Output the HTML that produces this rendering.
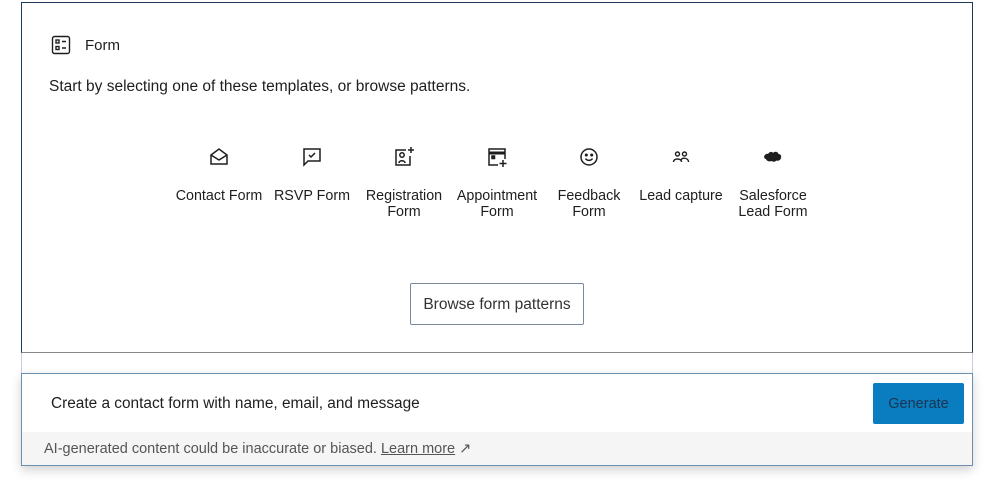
<!DOCTYPE html>
<html><head><style>
body{margin:0;width:1000px;height:482px;background:#fff;font-family:"Liberation Sans",sans-serif;color:#1e1e1e;position:relative;overflow:hidden}
.box{position:absolute;left:21px;top:2px;width:950px;height:349px;border:1px solid #1e3a5a;border-bottom:1px solid #888}
.title{position:absolute;left:51px;top:35px;font-size:15px;display:flex;align-items:center;gap:14px}
.sub{position:absolute;left:49px;top:78px;font-size:15.5px}
.item{position:absolute;top:146px;width:92px;text-align:center;font-size:14.3px;line-height:16px;white-space:nowrap}
.item svg{display:block;margin:0 auto 20px}
.btn{position:absolute;left:410px;top:283px;width:172px;height:40px;border:1px solid #7a8a9e;border-radius:2px;font-size:15.5px;color:#333;text-align:center;line-height:41px}
.mid{position:absolute;left:21px;top:353px;width:950px;height:20px;border-left:1px solid #ccd;border-right:1px solid #ccd}
.panel{position:absolute;left:21px;top:373px;width:950px;height:91px;border:1px solid #6b8fb0;box-shadow:0 4px 10px rgba(0,0,0,.18);background:#fff}
.panel .inp{position:absolute;left:29px;top:21px;font-size:15.4px}
.gen{position:absolute;left:851px;top:9px;width:91px;height:41px;background:#0a7cc0;border-radius:2px;color:#1a3550;font-size:14.5px;text-align:center;line-height:42px}
.foot{position:absolute;left:0;top:58px;width:950px;height:33px;background:#f5f5f5;font-size:14.5px;color:#555;line-height:35px;padding-left:22px;box-sizing:border-box}
.foot u{color:#555}
</style></head><body>
<div class="box"></div>
<div class="title"><svg width="20" height="20" viewBox="0 0 20 20" fill="none" stroke="#1e1e1e" stroke-width="1.4"><rect x="1.5" y="1.5" width="17" height="17" rx="2"/><rect x="5" y="5" width="3" height="3"/><rect x="5" y="11.5" width="3" height="3"/><path d="M11 6.5h4M11 13h4"/></svg>Form</div>
<div class="sub">Start by selecting one of these templates, or browse patterns.</div>

<div class="item" style="left:173px"><svg width="22" height="22" viewBox="0 0 22 22" fill="none" stroke="#1e1e1e" stroke-width="1.5"><path d="M3 9l8-6 8 6v9H3z"/><path d="M3 9l8 5 8-5"/></svg>Contact Form</div>
<div class="item" style="left:266px"><svg width="22" height="22" viewBox="0 0 22 22" fill="none" stroke="#1e1e1e" stroke-width="1.5"><path d="M3 3h16v12H7l-4 4z"/><path d="M8 9l2 2 4-4"/></svg>RSVP Form</div>
<div class="item" style="left:358px"><svg width="22" height="22" viewBox="0 0 22 22" fill="none" stroke="#1e1e1e" stroke-width="1.5"><path d="M13 4H3v15h14V10"/><circle cx="9" cy="9" r="2.2"/><path d="M6 17c0-3 6-3 6 0"/><path d="M18 1v6M15 4h6"/></svg>Registration<br>Form</div>
<div class="item" style="left:451px"><svg width="22" height="22" viewBox="0 0 22 22" fill="none" stroke="#1e1e1e" stroke-width="1.5"><path d="M12 19H3V3h16v10"/><path d="M3 7h16" stroke-width="3"/><rect x="6" y="10" width="2.5" height="2.5" fill="#1e1e1e"/><path d="M17 14v7M13.5 17.5h7"/></svg>Appointment<br>Form</div>
<div class="item" style="left:543px"><svg width="22" height="22" viewBox="0 0 22 22" fill="none" stroke="#1e1e1e" stroke-width="1.5"><circle cx="11" cy="11" r="8"/><circle cx="8.3" cy="9" r=".8" fill="#1e1e1e"/><circle cx="13.7" cy="9" r=".8" fill="#1e1e1e"/><path d="M7.5 12.5c1.5 2.5 5.5 2.5 7 0"/></svg>Feedback<br>Form</div>
<div class="item" style="left:635px"><svg width="22" height="22" viewBox="0 0 22 22" fill="none" stroke="#1e1e1e" stroke-width="1.4"><circle cx="7.5" cy="8" r="2"/><circle cx="14.5" cy="8" r="2"/><path d="M3.5 16c0-4 8-4 8 0M11 14c1.5-3 7.5-2 7.5 2"/></svg>Lead capture</div>
<div class="item" style="left:727px"><svg width="22" height="22" viewBox="0 0 22 22"><path d="M6 8c1-2 4-3 5-1 1.5-2 5-1.5 5.5 1 2.5 0 3.5 3 2 5-1 2-3 2-4 1.5-1 1.5-4 1.5-5 .5-2 1-5 0-5.5-2-2 0-2.5-3-1-4 .5-1 2-1.5 3-1z" fill="#1e1e1e"/></svg>Salesforce<br>Lead Form</div>

<div class="btn">Browse form patterns</div>
<div class="mid"></div>
<div class="panel">
<div class="inp">Create a contact form with name, email, and message</div>
<div class="gen">Generate</div>
<div class="foot">AI-generated content could be inaccurate or biased. <u>Learn more</u> ↗</div>
</div>
</body></html>
